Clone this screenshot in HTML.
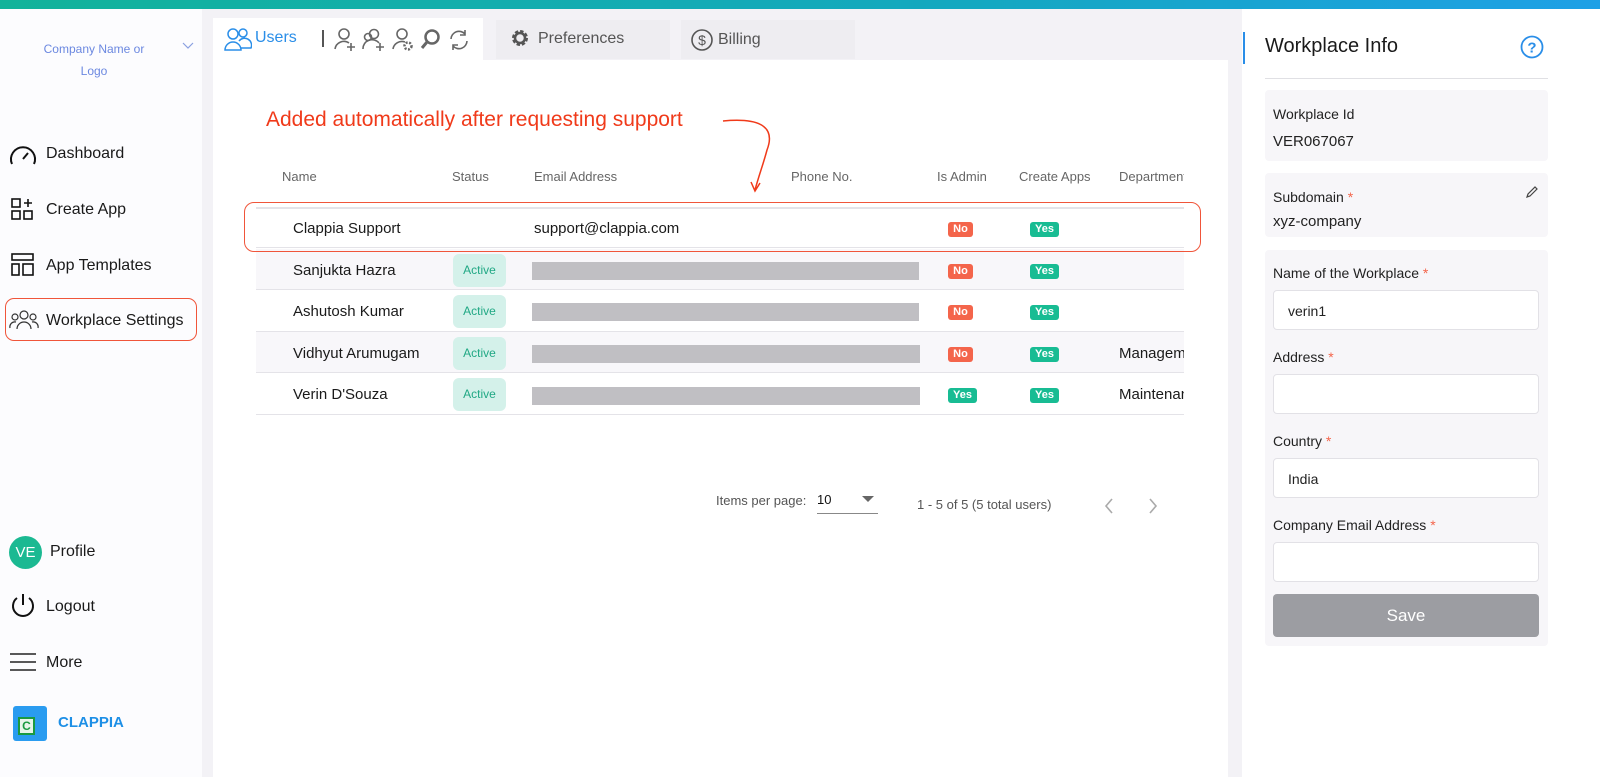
<!DOCTYPE html>
<html><head><meta charset="utf-8"><style>
*{box-sizing:border-box;margin:0;padding:0}
body{width:1600px;height:777px;overflow:hidden;background:#f3f2f6;font-family:"Liberation Sans",sans-serif;position:relative;color:#222}
.a{position:absolute}
.top{left:0;top:0;width:1600px;height:9px;background:linear-gradient(90deg,#12b39a,#14a8c0 60%,#1ea0e6)}
.side{left:0;top:9px;width:202px;height:768px;background:#fcfcfe}
.nav{position:absolute;left:46px;font-size:16px;color:#1a1a1a}
.main{left:213px;top:60px;width:1015px;height:717px;background:#fff}
.th{position:absolute;top:169px;font-size:13px;color:#666}
.row{position:absolute;left:256px;width:928px;height:41px;border-bottom:1px solid #e4e3e8}
.cell{position:absolute;font-size:15px;color:#1a1a1a}
.bar{position:absolute;left:532px;height:18px;background:#c0bfc3}
.act{position:absolute;left:453px;width:53px;height:33px;border-radius:6px;background:#d4f1ea;color:#20a884;font-size:12px;text-align:center;line-height:33px}
.no,.yes{position:absolute;height:15px;border-radius:3px;color:#fff;font-size:11px;line-height:15px;text-align:center;font-weight:bold}
.no{background:#f4654b;width:25px;left:948px}
.yes{background:#18bc93;width:29px}
.right{left:1242px;top:9px;width:358px;height:768px;background:#fff}
.box{position:absolute;left:1265px;width:283px;background:#f7f6f9;border-radius:4px}
.lbl{position:absolute;left:1273px;font-size:14px;color:#222}
.lbl b{color:#f4654b;font-weight:normal}
.inp{position:absolute;left:1273px;width:266px;height:40px;background:#fff;border:1px solid #e2e1e6;border-radius:4px;font-size:14px;padding:12px 14px}
</style></head><body>
<div class="a top"></div>
<div class="a side"></div>
<div class="a" style="left:34px;top:38px;width:120px;text-align:center;font-size:12px;color:#6b88e0;line-height:22px">Company Name or Logo</div>
<svg class="a" style="left:182px;top:42px" width="12" height="8"><path d="M1 1l5 5 5-5" fill="none" stroke="#8aa0e0" stroke-width="1.2"/></svg>
<svg class="a" style="left:8px;top:142px" width="30" height="26"><path d="M4 22A12 12 0 1 1 26 22" fill="none" stroke="#111" stroke-width="2"/><path d="M15 17l5-6" stroke="#111" stroke-width="2"/></svg>
<div class="nav" style="top:145px">Dashboard</div>
<svg class="a" style="left:11px;top:198px" width="24" height="24" fill="none" stroke="#111" stroke-width="1.6"><rect x="1" y="1" width="8" height="8"/><rect x="1" y="13" width="8" height="8"/><rect x="13" y="13" width="8" height="8"/><path d="M17 1v8M13 5h8"/></svg>
<div class="nav" style="top:201px">Create App</div>
<svg class="a" style="left:11px;top:253px" width="24" height="24" fill="none" stroke="#111" stroke-width="1.6"><rect x="1" y="1" width="21" height="6"/><rect x="1" y="11" width="7" height="11"/><rect x="12" y="11" width="10" height="11"/></svg>
<div class="nav" style="top:257px">App Templates</div>
<div class="a" style="left:5px;top:298px;width:192px;height:43px;border:1.5px solid #f0553a;border-radius:9px"></div>
<svg class="a" style="left:9px;top:309px" width="30" height="22" fill="none" stroke="#333" stroke-width="1.2"><circle cx="15" cy="6" r="4"/><circle cx="6" cy="8" r="3"/><circle cx="24" cy="8" r="3"/><path d="M8 20a7 7 0 0 1 14 0M1 19a5 5 0 0 1 6-6M29 19a5 5 0 0 0-6-6"/></svg>
<div class="nav" style="top:312px">Workplace Settings</div>
<div class="a" style="left:9px;top:536px;width:33px;height:33px;border-radius:50%;background:#1bb992;color:#fff;font-size:15px;text-align:center;line-height:33px">VE</div>
<div class="nav" style="top:543px;left:50px">Profile</div>
<svg class="a" style="left:10px;top:592px" width="26" height="28" fill="none" stroke="#111" stroke-width="2"><path d="M13 2v11M7 6a10 10 0 1 0 12 0"/></svg>
<div class="nav" style="top:598px">Logout</div>
<svg class="a" style="left:10px;top:652px" width="26" height="20" stroke="#222" stroke-width="1.6"><path d="M0 2h26M0 10h26M0 18h26"/></svg>
<div class="nav" style="top:654px">More</div>
<div class="a" style="left:13px;top:706px;width:34px;height:35px;background:#2a9cf0;border-radius:3px"></div>
<div class="a" style="left:18px;top:717px;width:17px;height:18px;background:#e8f5ea;border:2px solid #1a9a40;color:#1a9a40;font-size:12px;font-weight:bold;text-align:center;line-height:14px">C</div>
<div class="a" style="left:58px;top:714px;font-size:15px;font-weight:bold;color:#1d8fe6">CLAPPIA</div>

<div class="a" style="left:213px;top:18px;width:270px;height:42px;background:#fff"></div>
<svg class="a" style="left:224px;top:27px" width="28" height="24" fill="none" stroke="#2a8ee8" stroke-width="1.5"><circle cx="9" cy="7" r="5"/><circle cx="19" cy="6" r="4"/><path d="M1 23a8 8 0 0 1 16 0zM15 14a7 7 0 0 1 12 7h-10"/></svg>
<div class="a" style="left:255px;top:29px;font-size:16px;color:#2a8ee8">Users</div>
<div class="a" style="left:322px;top:30px;width:2px;height:17px;background:#555"></div>
<svg class="a" style="left:333px;top:27px" width="140" height="26" fill="none" stroke="#666" stroke-width="1.6"><circle cx="11" cy="7" r="5"/><path d="M2 22a9 9 0 0 1 14-6M18 16v8M14 20h8"/><circle cx="41" cy="7" r="4.5"/><circle cx="35" cy="10" r="3.5"/><path d="M30 22a9 9 0 0 1 16-6M47 16v8M43 20h8"/><circle cx="69" cy="7" r="5"/><path d="M60 22a9 9 0 0 1 12-7"/><circle cx="75" cy="19" r="3.5" stroke-width="2.5" stroke-dasharray="2 1.5"/><circle cx="99" cy="10" r="6.5" stroke-width="2.5"/><path d="M94 15l-5 6" stroke-width="3"/><path d="M118 12a8 8 0 0 1 14-5M134 14a8 8 0 0 1-14 5M132 3v5h-5M120 23v-5h5"/></svg>
<div class="a" style="left:496px;top:20px;width:174px;height:39px;background:#eeedf1"></div>
<svg class="a" style="left:510px;top:28px" width="20" height="20"><circle cx="10" cy="10" r="6" fill="none" stroke="#555" stroke-width="4" stroke-dasharray="3 1.7"/><circle cx="10" cy="10" r="5" fill="none" stroke="#555" stroke-width="2.5"/></svg>
<div class="a" style="left:538px;top:30px;font-size:16px;color:#555">Preferences</div>
<div class="a" style="left:681px;top:20px;width:174px;height:39px;background:#eeedf1"></div>
<svg class="a" style="left:690px;top:28px" width="24" height="24"><circle cx="12" cy="12" r="10" fill="none" stroke="#555" stroke-width="1.6"/><text x="12" y="17" font-size="14" text-anchor="middle" fill="#555" font-family="Liberation Sans">$</text></svg>
<div class="a" style="left:718px;top:31px;font-size:16px;color:#555">Billing</div>

<div class="a main"></div>
<div class="a" style="left:266px;top:108px;font-size:21px;color:#f03a1a">Added automatically after requesting support</div>
<svg class="a" style="left:715px;top:110px" width="60" height="85" fill="none" stroke="#f03a1a" stroke-width="1.5"><path d="M8 11C40 8 62 14 52 40 48 55 44 65 40 80"/><path d="M36 72l4 9 5-8"/></svg>
<div class="th" style="left:282px">Name</div><div class="th" style="left:452px">Status</div><div class="th" style="left:534px">Email Address</div><div class="th" style="left:791px">Phone No.</div><div class="th" style="left:937px">Is Admin</div><div class="th" style="left:1019px">Create Apps</div><div class="th" style="left:1119px;width:65px;overflow:hidden;white-space:nowrap">Department</div>

<div class="row" style="top:207px;border-top:2px solid #e4e3e8"></div>
<div class="row" style="top:249px;background:#f8f7fa"></div>
<div class="row" style="top:291px"></div>
<div class="row" style="top:332px;background:#f8f7fa"></div>
<div class="row" style="top:374px"></div>
<div class="a" style="left:244px;top:202px;width:957px;height:50px;border:1.5px solid #f0553a;border-radius:10px"></div>
<div class="cell" style="left:293px;top:220px">Clappia Support</div>
<div class="cell" style="left:534px;top:220px">support@clappia.com</div>
<div class="no" style="top:222px">No</div><div class="yes" style="left:1030px;top:222px">Yes</div>

<div class="cell" style="left:293px;top:262px">Sanjukta Hazra</div><div class="act" style="top:254px">Active</div><div class="bar" style="top:262px;width:387px"></div><div class="no" style="top:264px">No</div><div class="yes" style="left:1030px;top:264px">Yes</div>
<div class="cell" style="left:293px;top:303px">Ashutosh Kumar</div><div class="act" style="top:295px">Active</div><div class="bar" style="top:303px;width:387px"></div><div class="no" style="top:305px">No</div><div class="yes" style="left:1030px;top:305px">Yes</div>
<div class="cell" style="left:293px;top:345px">Vidhyut Arumugam</div><div class="act" style="top:337px">Active</div><div class="bar" style="top:345px;width:388px"></div><div class="no" style="top:347px">No</div><div class="yes" style="left:1030px;top:347px">Yes</div><div class="cell" style="left:1119px;top:345px;width:65px;overflow:hidden;white-space:nowrap">Management</div>
<div class="cell" style="left:293px;top:386px">Verin D'Souza</div><div class="act" style="top:378px">Active</div><div class="bar" style="top:387px;width:388px"></div><div class="yes" style="left:948px;top:388px">Yes</div><div class="yes" style="left:1030px;top:388px">Yes</div><div class="cell" style="left:1119px;top:386px;width:65px;overflow:hidden;white-space:nowrap">Maintenance</div>

<div class="a" style="left:716px;top:493px;font-size:13px;color:#555">Items per page:</div>
<div class="a" style="left:817px;top:492px;font-size:13px;color:#111">10</div>
<div class="a" style="left:817px;top:513px;width:61px;height:1px;background:#888"></div>
<svg class="a" style="left:862px;top:496px" width="12" height="7"><path d="M0 0h12L6 6z" fill="#666"/></svg>
<div class="a" style="left:917px;top:497px;font-size:13px;color:#555">1 - 5 of 5 (5 total users)</div>
<svg class="a" style="left:1103px;top:498px" width="60" height="16" fill="none" stroke="#aaa" stroke-width="1.6"><path d="M9 1L3 8l6 7M47 1l6 7-6 7"/></svg>

<div class="a right"></div>
<div class="a" style="left:1243px;top:32px;width:2px;height:32px;background:#2a8ee8"></div>
<div class="a" style="left:1265px;top:35px;font-size:20px;color:#1a1a1a">Workplace Info</div>
<svg class="a" style="left:1520px;top:35px" width="24" height="24"><circle cx="12" cy="12" r="10.5" fill="none" stroke="#2a8ee8" stroke-width="1.8"/><text x="12" y="17.5" font-size="15" font-weight="bold" text-anchor="middle" fill="#2a8ee8" font-family="Liberation Sans">?</text></svg>
<div class="a" style="left:1265px;top:78px;width:283px;height:1px;background:#e0e0e4"></div>
<div class="box" style="top:90px;height:71px"></div>
<div class="lbl" style="top:106px">Workplace Id</div>
<div class="lbl" style="top:133px;font-size:15px">VER067067</div>
<div class="box" style="top:173px;height:64px"></div>
<div class="lbl" style="top:189px">Subdomain <b>*</b></div>
<div class="lbl" style="top:213px;font-size:15px">xyz-company</div>
<svg class="a" style="left:1525px;top:186px" width="13" height="13" fill="none" stroke="#444" stroke-width="1.2"><path d="M2 11l1-3 7-7 2 2-7 7z"/></svg>
<div class="box" style="top:250px;height:396px"></div>
<div class="lbl" style="top:265px">Name of the Workplace <b>*</b></div>
<div class="inp" style="top:290px">verin1</div>
<div class="lbl" style="top:349px">Address <b>*</b></div>
<div class="inp" style="top:374px"></div>
<div class="lbl" style="top:433px">Country <b>*</b></div>
<div class="inp" style="top:458px">India</div>
<div class="lbl" style="top:517px">Company Email Address <b>*</b></div>
<div class="inp" style="top:542px"></div>
<div class="a" style="left:1273px;top:594px;width:266px;height:43px;background:#9c9da2;border-radius:4px;color:#fff;font-size:17px;text-align:center;line-height:43px">Save</div>
</body></html>
